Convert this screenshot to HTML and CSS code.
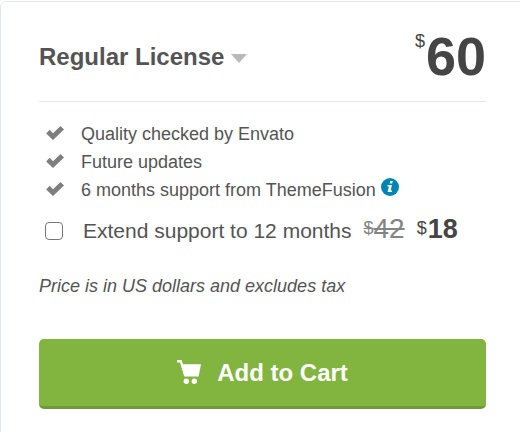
FILE: index.html
```html
<!DOCTYPE html>
<html lang="en">
<head>
    <meta charset="UTF-8">
    <meta name="viewport" content="width=device-width, initial-scale=1.0">
    <title>Regular License</title>
    <link rel="stylesheet" href="styles.css">
</head>
<body>
    <div class="purchase-box">
        <div class="purchase-header">
            <h2>Regular License <svg class="arrow" viewBox="0 0 16 9"><path d="M0 0h16L8 9z"/></svg></h2>
            <div class="price"><sup>$</sup><b>60</b></div>
        </div>
        <ul class="features">
            <li><svg class="check" viewBox="0 0 18 14"><path d="M0.2 7.4 3.6 3.7 7 7.2 14.5 0 18 3.4 7 14z"/></svg><span>Quality checked by Envato</span></li>
            <li><svg class="check" viewBox="0 0 18 14"><path d="M0.2 7.4 3.6 3.7 7 7.2 14.5 0 18 3.4 7 14z"/></svg><span>Future updates</span></li>
            <li>
                <svg class="check" viewBox="0 0 18 14"><path d="M0.2 7.4 3.6 3.7 7 7.2 14.5 0 18 3.4 7 14z"/></svg><span>6 months support from ThemeFusion</span>
                <svg class="info" viewBox="0 0 18 18">
                    <circle cx="9" cy="9" r="9"/>
                    <path d="M9.2 3h2.5l-.5 2.4H8.7zM6.7 7.1h4.2l-1.2 5.5h1.4l-.4 1.4H6.6l1.3-5.6H6.4z"/>
                </svg>
            </li>
        </ul>
        <label class="extend">
            <input type="checkbox" name="extend_support">
            <span class="extend-text">Extend support to 12 months</span>
            <span class="old-price"><small>$</small><span>42</span></span>
            <span class="new-price"><small>$</small><b>18</b></span>
        </label>
        <p class="note">Price is in US dollars and excludes tax</p>
        <button type="button" class="cart-btn">
            <svg class="cart" viewBox="0 0 24 24">
                <path d="M0 0h4.6l1.4 4.2H24L21.6 16.6H7.2L3 2.6H0z"/>
                <circle cx="9.3" cy="21.3" r="2.7"/>
                <circle cx="17.3" cy="21.3" r="2.7"/>
            </svg>
            <span>Add to Cart</span>
        </button>
    </div>
</body>
</html>
```
FILE: styles.css
```css
* {
    box-sizing: border-box;
}
body {
    margin: 0;
    background: #fff;
    color: #545454;
    font-family: "Liberation Sans", Arial, sans-serif;
    overflow: hidden;
}
.purchase-box {
    width: 540px;
    height: 450px;
    margin-top: 1px;
    padding: 0 53px 0 38px;
    border: 1px solid #e1e8ed;
    border-radius: 6px;
}
.purchase-header {
    display: flex;
    justify-content: space-between;
    height: 100px;
    border-bottom: 1px solid #e1e8ed;
}
h2 {
    margin: 41px 0 0;
    font-size: 24px;
    line-height: 28px;
}
.arrow {
    width: 16px;
    height: 9px;
    vertical-align: 2px;
    fill: #b9b9b9;
}
.price {
    display: flex;
    color: #454545;
}
.price sup {
    margin: 29px 1px 0 0;
    font-size: 18px;
    line-height: 20px;
}
.price b {
    margin-top: 24px;
    font-size: 54px;
    line-height: 60px;
}
.features {
    list-style: none;
    margin: 18px 0 0;
    padding: 0;
    font-size: 18px;
    line-height: 28px;
}
.features li {
    display: flex;
    height: 28px;
}
.check {
    width: 18px;
    height: 14px;
    margin: 6px 17px 0 7px;
    fill: #7e7e7e;
}
.info {
    width: 18px;
    height: 18px;
    margin: 2px 0 0 5px;
    fill: #0084b4;
}
.info path {
    fill: #fff;
}
.extend {
    display: flex;
    align-items: baseline;
    height: 32px;
    margin-top: 9px;
    font-size: 21px;
    line-height: 32px;
}
.extend input {
    appearance: none;
    align-self: flex-start;
    width: 18px;
    height: 18px;
    margin: 9px 20px 0 6px;
    border: 1.5px solid #767676;
    border-radius: 4px;
}
.old-price {
    display: flex;
    align-items: baseline;
    margin-left: 12px;
    color: #848484;
    font-size: 28px;
}
.old-price small,
.old-price span {
    text-decoration: line-through;
}
.new-price {
    display: flex;
    align-items: baseline;
    margin-left: 12px;
    color: #454545;
    font-size: 27px;
}
.new-price b {
    margin-left: 1px;
}
.extend small {
    font-size: 18px;
    position: relative;
    top: -4px;
}
.note {
    margin: 27px 0 0;
    font-size: 18px;
    font-style: italic;
    line-height: 28px;
}
.cart-btn {
    display: flex;
    align-items: center;
    justify-content: center;
    width: 100%;
    height: 70px;
    margin-top: 39px;
    padding: 0;
    background: #82b440;
    color: #fff;
    border: none;
    border-bottom: 3px solid #6f9a37;
    border-radius: 5px;
    font-family: inherit;
    font-size: 24px;
    font-weight: bold;
}
.cart {
    width: 24px;
    height: 24px;
    margin: 0 16px 2px 0;
    fill: #fff;
}
```
